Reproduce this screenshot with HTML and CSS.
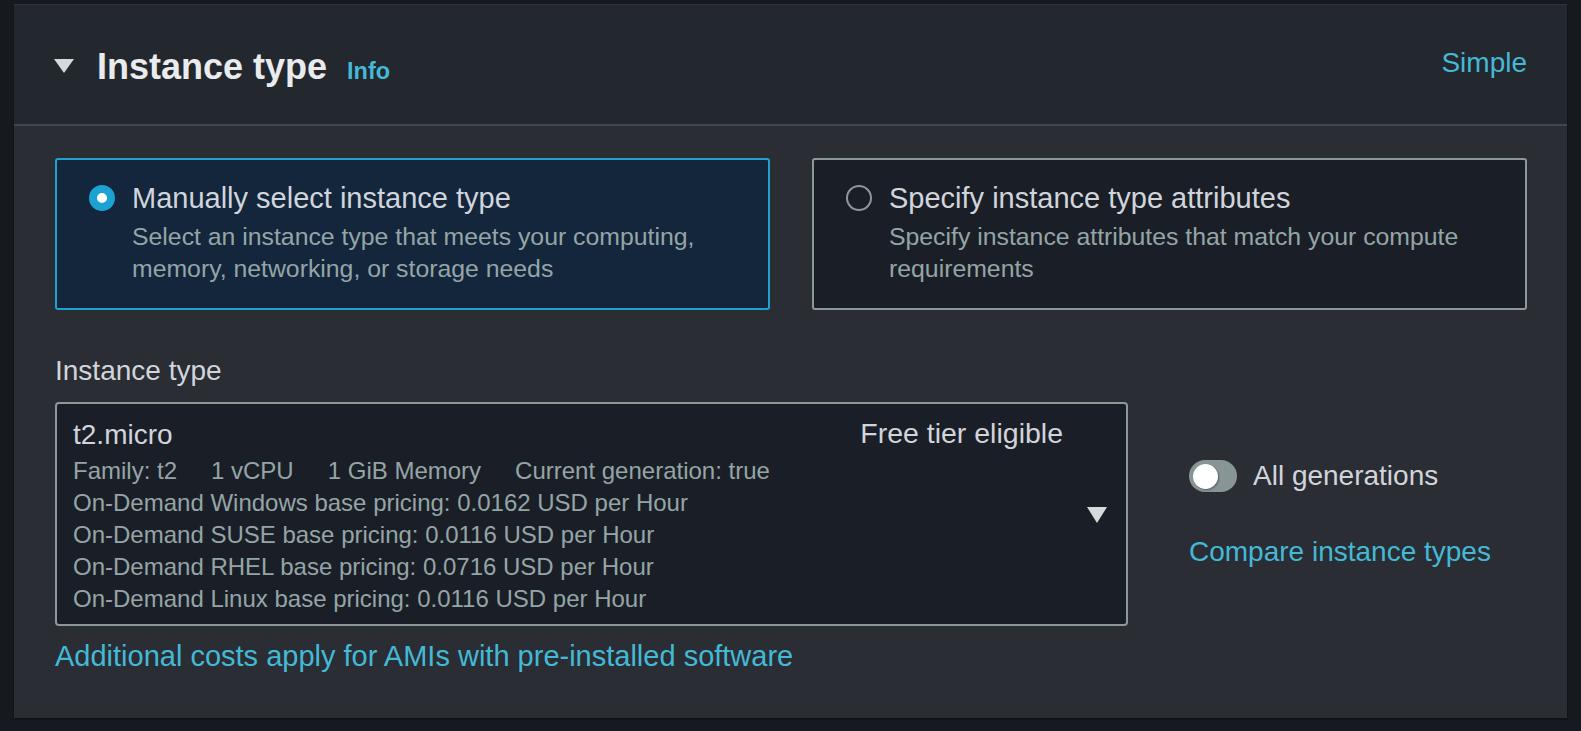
FILE: index.html
```html
<!DOCTYPE html>
<html lang="en">
<head>
<meta charset="utf-8">
<title>Instance type</title>
<link rel="stylesheet" href="styles.css">
</head>
<body>
<div class="panel">
  <div class="panel-header">
    <div class="header-left">
      <svg class="expand-caret" width="20" height="16" viewBox="0 0 20 16"><polygon points="0,1 20,1 10,15" fill="currentColor"/></svg>
      <h2 class="title">Instance type</h2>
      <a class="info-link">Info</a>
    </div>
    <a class="simple-link">Simple</a>
  </div>
  <div class="panel-body">
    <div class="tiles">
      <div class="tile tile-selected">
        <span class="radio radio-on"></span>
        <div class="tile-text">
          <div class="tile-label">Manually select instance type</div>
          <div class="tile-desc">Select an instance type that meets your computing, memory, networking, or storage needs</div>
        </div>
      </div>
      <div class="tile">
        <span class="radio"></span>
        <div class="tile-text">
          <div class="tile-label">Specify instance type attributes</div>
          <div class="tile-desc">Specify instance attributes that match your compute requirements</div>
        </div>
      </div>
    </div>

    <div class="field-label">Instance type</div>
    <div class="select-row">
      <div class="select">
        <div class="select-content">
          <div class="option-top">
            <span class="option-name">t2.micro</span>
            <span class="option-tag">Free tier eligible</span>
          </div>
          <div class="option-tags">
            <span>Family: t2</span><span>1 vCPU</span><span>1 GiB Memory</span><span>Current generation: true</span>
          </div>
          <div class="option-line">On-Demand Windows base pricing: 0.0162 USD per Hour</div>
          <div class="option-line">On-Demand SUSE base pricing: 0.0116 USD per Hour</div>
          <div class="option-line">On-Demand RHEL base pricing: 0.0716 USD per Hour</div>
          <div class="option-line">On-Demand Linux base pricing: 0.0116 USD per Hour</div>
        </div>
        <svg class="select-caret" width="20" height="16" viewBox="0 0 20 16"><polygon points="0,0 20,0 10,16" fill="currentColor"/></svg>
      </div>
      <div class="side">
        <div class="toggle-row">
          <span class="toggle"><span class="knob"></span></span>
          <span class="toggle-label">All generations</span>
        </div>
        <a class="link">Compare instance types</a>
      </div>
    </div>
    <a class="link footnote">Additional costs apply for AMIs with pre-installed software</a>
  </div>
</div>
</body>
</html>
```

FILE: styles.css
```css
* { box-sizing: border-box; }
html, body { margin: 0; padding: 0; }
body {
  background: #16191f;
  font-family: "Liberation Sans", Arial, sans-serif;
  color: #d1d5db;
  padding: 4px 14px 13px 14px;
}
a { text-decoration: none; cursor: pointer; }

.panel {
  background: #2a2d33;
  box-shadow: 0 1px 2px rgba(0,0,0,0.5);
}

.panel-header {
  background: #23272e;
  border-top: 1px solid #2f333a;
  border-bottom: 2px solid #414750;
  display: flex;
  justify-content: space-between;
  align-items: flex-start;
  padding: 40px 40px 35px 40px;
}
.header-left {
  display: flex;
  align-items: baseline;
}
.expand-caret {
  color: #d5dbdb;
  align-self: center;
  margin: 0 23px 0 0;
  position: relative;
  top: -1px;
}
.title {
  margin: 0;
  font-size: 36px;
  line-height: 44px;
  font-weight: 700;
  color: #e9ebed;
}
.info-link {
  margin-left: 20px;
  font-size: 23.5px;
  font-weight: 700;
  color: #44b9d6;
}
.simple-link {
  font-size: 28px;
  line-height: 40px;
  color: #44b9d6;
  margin-top: -2px;
}

.panel-body {
  padding: 32px 40px 42px 41px;
}

.tiles {
  display: grid;
  grid-template-columns: 715px 715px;
  gap: 42px;
}
.tile {
  display: flex;
  align-items: flex-start;
  gap: 17px;
  background: #1a1f27;
  border: 2px solid #8d9999;
  border-radius: 3px;
  padding: 18px 32px 22px 32px;
  min-height: 152px;
}
.tile-selected {
  background: #13263c;
  border-color: #1fa1d1;
}
.radio {
  flex: 0 0 auto;
  width: 26px;
  height: 26px;
  border-radius: 50%;
  border: 2px solid #8d9999;
  margin-top: 7px;
}
.radio-on {
  border: 8px solid #1ba2d3;
  background: #ffffff;
}
.tile-label {
  font-size: 29px;
  line-height: 40px;
  color: #d1d5db;
}
.tile-desc {
  margin-top: 3px;
  font-size: 24.8px;
  line-height: 31.5px;
  color: #95a5a6;
}

.field-label {
  margin-top: 41px;
  font-size: 28px;
  line-height: 40px;
  color: #d1d5db;
}

.select-row {
  margin-top: 11px;
  display: flex;
  align-items: center;
  gap: 61px;
}
.select {
  flex: 0 0 1073px;
  display: flex;
  align-items: center;
  background: #1a1f27;
  border: 2px solid #8d9999;
  border-radius: 4px;
  padding: 10px 19px 9px 16px;
}
.select-content {
  flex: 1 1 auto;
}
.option-top {
  display: flex;
  justify-content: space-between;
  align-items: baseline;
}
.option-name {
  font-size: 28px;
  line-height: 40px;
  color: #d1d5db;
}
.option-tag {
  font-size: 28.5px;
  line-height: 40px;
  color: #d1d5db;
  position: relative;
  top: -1px;
  margin-right: 2px;
}
.option-tags {
  display: flex;
  gap: 34px;
  font-size: 24px;
  line-height: 32px;
  color: #95a5a6;
}
.option-line {
  font-size: 24px;
  line-height: 32px;
  color: #95a5a6;
}
.select-caret {
  flex: 0 0 auto;
  color: #d5dbdb;
  margin-left: 22px;
}

.side {
  display: flex;
  flex-direction: column;
  gap: 36px;
}
.toggle-row {
  display: flex;
  align-items: center;
  gap: 16px;
  height: 40px;
}
.toggle {
  position: relative;
  width: 48px;
  height: 32px;
  border-radius: 16px;
  background: #879596;
}
.knob {
  position: absolute;
  left: 4px;
  top: 3.5px;
  width: 25px;
  height: 25px;
  border-radius: 50%;
  background: #ffffff;
  box-shadow: 1px 1px 2px rgba(0,0,0,0.35);
}
.toggle-label {
  font-size: 28px;
  line-height: 40px;
  color: #d1d5db;
}
.link {
  font-size: 28px;
  line-height: 40px;
  color: #44b9d6;
}
.footnote {
  display: block;
  margin-top: 10px;
  font-size: 29px;
}
```
